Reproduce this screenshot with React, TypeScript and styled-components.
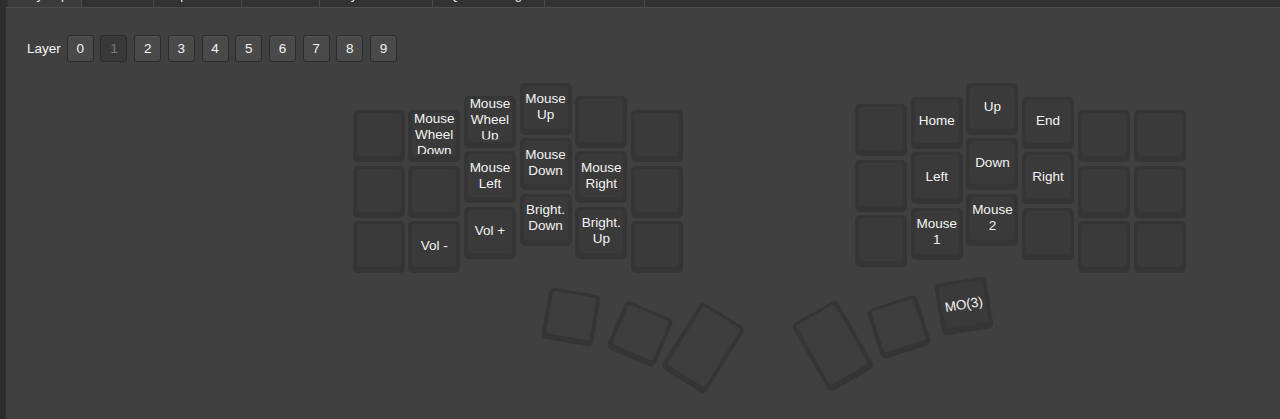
import React from "react";
import styled, { createGlobalStyle } from "styled-components";

const GlobalStyle = createGlobalStyle`
  html, body {
    margin: 0;
    padding: 0;
    background: #404040;
    overflow: hidden;
  }
  body {
    font-family: "Liberation Sans", Arial, Helvetica, sans-serif;
  }
`;

const Window = styled.div`
  display: flex;
  width: 1280px;
  height: 419px;
  overflow: hidden;
  background: #404040;
`;

const SideStrip = styled.div`
  width: 6px;
  flex: none;
  background: #2d2d2d;
`;

const Main = styled.div`
  flex: 1;
  display: flex;
  flex-direction: column;
  min-width: 0;
`;

const TabBar = styled.div`
  display: flex;
  height: 24px;
  margin-top: -17px;
  padding-left: 2px;
  background: #313131;
  border-bottom: 1px solid #4c4c4c;
  flex: none;
`;

const Tab = styled.div<{ $w: number; $active?: boolean }>`
  width: ${(p) => p.$w}px;
  flex: none;
  box-sizing: border-box;
  text-align: center;
  font-size: 13px;
  line-height: 24px;
  color: #ececec;
  background: ${(p) => (p.$active ? "#3b3b3b" : "#323232")};
  border-right: 1px solid #4a4a4a;
  white-space: nowrap;
  overflow: hidden;
`;

const LayerRow = styled.div`
  display: flex;
  align-items: center;
  height: 27px;
  margin-top: 27px;
  padding-left: 21px;
  flex: none;
`;

const LayerLabel = styled.span`
  font-size: 13.5px;
  color: #f4f4f4;
  margin-right: 6px;
`;

const LayerButtons = styled.div`
  display: flex;
  gap: 6.7px;
`;

const LayerButton = styled.button<{ $active?: boolean }>`
  width: 27px;
  height: 27px;
  padding: 0;
  box-sizing: border-box;
  border-radius: 3px;
  border: 1px solid #2b2b2b;
  background: ${(p) => (p.$active ? "#393939" : "#4a4a4a")};
  box-shadow: ${(p) =>
    p.$active ? "none" : "inset 0 1px 0 rgba(255,255,255,0.06)"};
  color: ${(p) => (p.$active ? "#7b7b7b" : "#f4f4f4")};
  font-family: "Liberation Sans", Arial, Helvetica, sans-serif;
  font-size: 13.5px;
  line-height: 25px;
  text-align: center;
`;

const Canvas = styled.div`
  position: relative;
  flex: 1;
`;

const KeyCap = styled.div<{ $w: number; $h: number }>`
  position: absolute;
  width: ${(p) => p.$w}px;
  height: ${(p) => p.$h}px;
  box-sizing: border-box;
  padding: 3px 4px 6px 4px;
  background: #353535;
  border-radius: 5px;
  display: flex;
  transform-origin: center center;
`;

const KeyFace = styled.div<{ $face: string }>`
  flex: 1;
  background: ${(p) => p.$face};
  border-radius: 3px;
  display: flex;
  min-height: 0;
`;

const KeyLabel = styled.div`
  flex: 1;
  display: flex;
  align-items: center;
  justify-content: center;
  text-align: center;
  white-space: pre-line;
  color: #f4f4f4;
  font-size: 13.5px;
  line-height: 16px;
  clip-path: inset(0 0 2px 0);
`;

const CANVAS_X = 6;
const CANVAS_Y = 62;
const UNIT = 55.7;
const KEY = 52;

type KeyDef = {
  x: number;
  y: number;
  label?: string;
};

const leftTops = [110, 110, 95.5, 82.5, 95.5, 110];
const rightTops = [104, 96.5, 82.5, 96.5, 110, 110];

const leftLabels: string[][] = [
  ["", "", ""],
  ["Mouse\nWheel\nDown", "", "Vol -"],
  ["Mouse\nWheel\nUp", "Mouse\nLeft", "Vol +"],
  ["Mouse\nUp", "Mouse\nDown", "Bright.\nDown"],
  ["", "Mouse\nRight", "Bright.\nUp"],
  ["", "", ""],
];

const rightLabels: string[][] = [
  ["", "", ""],
  ["Home", "Left", "Mouse\n1"],
  ["Up", "Down", "Mouse\n2"],
  ["End", "Right", ""],
  ["", "", ""],
  ["", "", ""],
];

const gridKeys: KeyDef[] = [];
leftLabels.forEach((col, c) =>
  col.forEach((label, r) =>
    gridKeys.push({ x: 352.5 + c * UNIT, y: leftTops[c] + r * UNIT, label })
  )
);
rightLabels.forEach((col, c) =>
  col.forEach((label, r) =>
    gridKeys.push({ x: 855 + c * UNIT, y: rightTops[c] + r * UNIT, label })
  )
);

type ThumbDef = { cx: number; cy: number; h: number; rot: number; label?: string; face: string };

const thumbs: ThumbDef[] = [
  { cx: 571, cy: 317, h: 52, rot: 10, face: "#3e3e3e" },
  { cx: 640, cy: 334, h: 52, rot: 23, face: "#3e3e3e" },
  { cx: 703, cy: 348, h: 78, rot: 32, face: "#3e3e3e" },
  { cx: 833, cy: 346, h: 78, rot: -30, face: "#3e3e3e" },
  { cx: 899, cy: 327, h: 52, rot: -18, face: "#3e3e3e" },
  { cx: 964, cy: 306, h: 52, rot: -9.5, label: "MO(3)", face: "#3a3a3a" },
];

const tabs = [
  { label: "Keymap", w: 74, active: true },
  { label: "Macros", w: 72 },
  { label: "Tap Dance", w: 88 },
  { label: "Combos", w: 78 },
  { label: "Key Overrides", w: 113 },
  { label: "QMK Settings", w: 112 },
  { label: "Matrix tester", w: 100 },
];

export default function App() {
  return (
    <>
      <GlobalStyle />
      <Window>
        <SideStrip />
        <Main>
          <TabBar>
            {tabs.map((t) => (
              <Tab key={t.label} $w={t.w} $active={t.active}>
                {t.label}
              </Tab>
            ))}
          </TabBar>
          <LayerRow>
            <LayerLabel>Layer</LayerLabel>
            <LayerButtons>
              {Array.from({ length: 10 }, (_, i) => (
                <LayerButton key={i} $active={i === 1}>
                  {i}
                </LayerButton>
              ))}
            </LayerButtons>
          </LayerRow>
          <Canvas>
            {gridKeys.map((k, i) => (
              <KeyCap
                key={"g" + i}
                $w={KEY}
                $h={KEY}
                style={{ left: k.x - CANVAS_X, top: k.y - CANVAS_Y }}
              >
                <KeyFace $face="#3a3a3a">
                  <KeyLabel>{k.label}</KeyLabel>
                </KeyFace>
              </KeyCap>
            ))}
            {thumbs.map((t, i) => (
              <KeyCap
                key={"t" + i}
                $w={KEY}
                $h={t.h}
                style={{
                  left: t.cx - KEY / 2 - CANVAS_X,
                  top: t.cy - t.h / 2 - CANVAS_Y,
                  transform: `rotate(${t.rot}deg)`,
                }}
              >
                <KeyFace $face={t.face}>
                  <KeyLabel>{t.label}</KeyLabel>
                </KeyFace>
              </KeyCap>
            ))}
          </Canvas>
        </Main>
      </Window>
    </>
  );
}
